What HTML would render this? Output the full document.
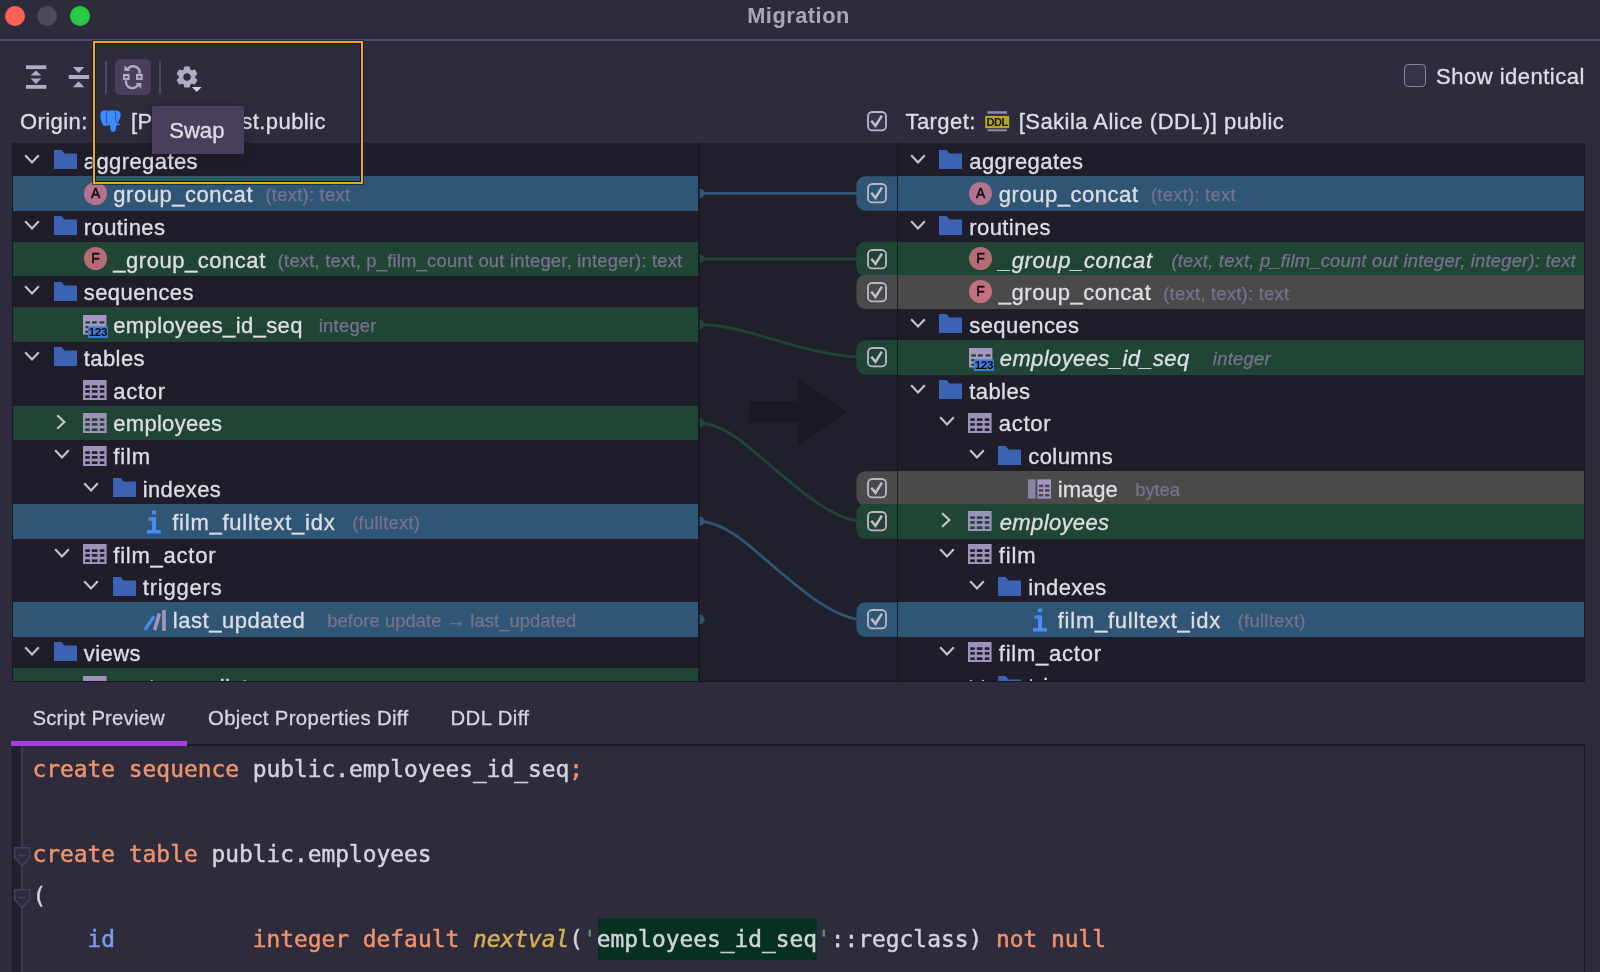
<!DOCTYPE html><html><head><meta charset="utf-8"><title>Migration</title><style>
*{box-sizing:border-box}
html,body{margin:0;padding:0}
body{width:1600px;height:972px;overflow:hidden;background:#2d2b3c;position:relative;font-family:"Liberation Sans",sans-serif;color:#dddde5}
#root{position:absolute;left:0;top:0;width:1600px;height:972px;overflow:hidden;will-change:transform}
.abs{position:absolute}
.ic{position:absolute;display:block;overflow:visible}
.panel{position:absolute;top:143px;height:538.7px;background:#1e1d29;overflow:hidden}
.row{position:absolute;left:0;width:100%;height:34.5px}
.tx{position:absolute;top:2.8px;height:32.78px;line-height:32.78px;white-space:nowrap}
.nm{font-size:22px;letter-spacing:0.42px;color:#dddde5;-webkit-text-stroke:0.35px #dddde5}
.dt{font-size:18.4px;letter-spacing:0.25px;color:#77728f;-webkit-text-stroke:0.25px #77728f;margin-left:13px;position:relative;top:-0.8px}
.it{font-style:italic}
.lbl{position:absolute;font-size:22px;letter-spacing:0.42px;white-space:nowrap;line-height:30px;color:#dddde5;-webkit-text-stroke:0.35px #dddde5}
.tab{position:absolute;top:702.6px;font-size:20.3px;letter-spacing:0.42px;line-height:30px;white-space:nowrap;color:#d6d5df;-webkit-text-stroke:0.3px #d6d5df}
.code{position:absolute;left:32.5px;font-family:"DejaVu Sans Mono","Liberation Mono",monospace;font-size:22.87px;line-height:42.5px;white-space:pre;color:#d3d4dc;-webkit-text-stroke:0.45px}
.kw{color:#f0936e}
.fn{color:#d9b14e;font-style:italic}
.id{color:#7e9df2}
.st{color:#4e9a62}
</style></head><body><div id="root">
<div class="abs" style="left:5px;top:6.3px;width:20.2px;height:20.2px;border-radius:50%;background:#fe5f57"></div>
<div class="abs" style="left:37.3px;top:6.3px;width:20.2px;height:20.2px;border-radius:50%;background:#4c4a5a"></div>
<div class="abs" style="left:70.1px;top:6.3px;width:20.2px;height:20.2px;border-radius:50%;background:#28c840"></div>
<div class="abs" style="left:0;top:0;width:1600px;height:32px;line-height:32px;text-align:center;font-weight:bold;font-size:21.8px;letter-spacing:0.5px;color:#a9a7b5;padding-right:3px">Migration</div>
<div class="abs" style="left:0;top:39px;width:1600px;height:2px;background:#4d4a66"></div>
<svg class="ic" style="left:25px;top:64px" width="23" height="26" viewBox="0 0 23 26"><rect x="0.9" y="1.3" width="20.4" height="3.8" fill="#b0acc2"/><rect x="0.9" y="21" width="20.4" height="3.8" fill="#b0acc2"/><path d="M10.9 6.5 L16.3 11.6 H5.5 Z" fill="#b0acc2"/><path d="M5.5 14.4 H16.3 L10.9 20 Z" fill="#b0acc2"/></svg>
<svg class="ic" style="left:68px;top:64px" width="23" height="26" viewBox="0 0 23 26"><path d="M4.8 2.9 H16.4 L10.6 9.1 Z" fill="#b0acc2"/><rect x="0.75" y="11" width="20.3" height="4" fill="#b0acc2"/><path d="M10.6 17.2 L16.4 23.2 H4.8 Z" fill="#b0acc2"/></svg>
<div class="abs" style="left:105px;top:60.6px;width:1.8px;height:33px;background:#4a4860"></div>
<div class="abs" style="left:159px;top:60.6px;width:1.8px;height:33px;background:#4a4860"></div>
<div class="abs" style="left:115px;top:58.8px;width:36px;height:36.2px;border-radius:5.5px;background:#493e5b"></div>
<svg class="ic" style="left:119px;top:63px" width="28" height="28" viewBox="0 0 28 28">
<path d="M20.6 10.6 A6.5 6.5 0 0 0 8.6 6.4" fill="none" stroke="#b0acc2" stroke-width="2.5"/>
<path d="M5.5 2.2 V7.9 H11.3 Z" fill="#b0acc2"/>
<path d="M7.1 17.4 A6.5 6.5 0 0 0 19.2 21.7" fill="none" stroke="#b0acc2" stroke-width="2.5"/>
<path d="M22.3 25.9 V20.1 H16.5 Z" fill="#b0acc2"/>
<rect x="4" y="10.9" width="6.6" height="6.2" fill="#b0acc2"/><rect x="6.3" y="13" width="2.1" height="2.1" fill="#493e5b"/>
<rect x="17" y="10.9" width="6.7" height="6.2" fill="#b0acc2"/><rect x="19.3" y="13" width="2.1" height="2.1" fill="#493e5b"/>
</svg>
<svg class="ic" style="left:175px;top:64.85px" width="30" height="30" viewBox="0 0 30 30"><path d="M9.18 4.73 L9.81 1.99 L14.19 1.99 L14.82 4.73 L16.89 5.92 L19.58 5.10 L21.77 8.89 L19.71 10.81 L19.71 13.19 L21.77 15.11 L19.58 18.90 L16.89 18.08 L14.82 19.27 L14.19 22.01 L9.81 22.01 L9.18 19.27 L7.11 18.08 L4.42 18.90 L2.23 15.11 L4.29 13.19 L4.29 10.81 L2.23 8.89 L4.42 5.10 L7.11 5.92 Z M16.3 12 A4.3 4.3 0 1 0 7.7 12 A4.3 4.3 0 1 0 16.3 12 Z" fill="#b0acc2" fill-rule="evenodd" stroke="#b0acc2" stroke-width="1.1" stroke-linejoin="round"/><path d="M16.85 22 H26.7 L21.8 27 Z" fill="#d5d3dd"/></svg>
<div class="abs" style="left:1403.5px;top:64.3px;width:22.6px;height:22.6px;border-radius:4px;border:1.7px solid #8c7fa8;background:#363346"></div>
<div class="lbl" style="left:1436px;top:61.6px;letter-spacing:0.5px">Show identical</div>
<div class="lbl" style="left:20px;top:107.1px">Origin:</div>
<svg class="ic" style="left:99.5px;top:110px" width="22" height="23" viewBox="0 0 22 23">
<path d="M3.6 0.6 C1.2 0.9 0.1 3.2 0.3 6 C0.5 9.4 1.6 13.4 3.4 15.4 C4.4 16.4 5.6 16 6.2 15 C6.6 15.8 7.6 16.2 8.6 15.4 C9.2 15.6 9.8 15.4 10.2 15 C10.2 16.6 10.2 18.4 10.6 19.8 C11 21.4 12.2 22.2 13.4 22 C14.8 21.8 15.8 20.6 16 18.6 L16.3 15.2 C17.6 15.4 19.2 15.2 20.4 14.2 C19.8 13.6 18.4 14 17.4 13.6 C17.3 13.4 17.4 13 17.6 12.8 C19.6 10.2 21.2 6.2 20.6 3.4 C20 0.9 17 0 14.4 0.7 C12.6 0.1 9.8 0.2 8.2 1 C6.8 0.4 5 0.4 3.6 0.6 Z" fill="#3c8bff"/>
<path d="M7 1.6 C5.8 4.6 6 9.4 6.8 13.4 M14.8 1.4 C16.4 3.4 15.8 6.4 15.6 8 C15.4 9.6 16.8 11.2 16.6 13" fill="none" stroke="#27304f" stroke-width="0.75" opacity="0.8"/>
</svg>
<div class="lbl" style="left:130.9px;top:107.1px">[P<span style="letter-spacing:-0.66px">agila] gue</span>st.public</div>
<svg class="ic" style="left:867.00px;top:111.00px" width="20" height="20.4" viewBox="0 0 20 20.4"><rect x="1" y="1" width="18" height="18.4" rx="4.2" fill="#363447" stroke="#bcb5c9" stroke-width="1.85"/><path d="M4.3 9.7 L8.5 14.9 L14.9 4.7" fill="none" stroke="#c4bed1" stroke-width="2.5" stroke-linejoin="miter"/></svg>
<div class="lbl" style="left:905.5px;top:107.1px">Target:</div>
<svg class="ic" style="left:984.5px;top:111px" width="25" height="21" viewBox="0 0 25 21">
<rect x="2.4" y="0.2" width="19.6" height="2.5" fill="#9388ad"/><rect x="2.4" y="18.3" width="19.6" height="2" fill="#9388ad"/>
<rect x="0.2" y="4.9" width="24" height="12.3" fill="#b5a81e"/>
<text x="12.2" y="15.3" text-anchor="middle" font-family="Liberation Sans, sans-serif" font-weight="bold" font-size="11.2" letter-spacing="-0.5" fill="#15131a">DDL</text></svg>
<div class="lbl" style="left:1018.7px;top:107.1px;letter-spacing:0.46px">[Sakila Alice (DDL)] public</div>
<div class="abs" style="left:698.5px;top:143px;width:199px;height:538.7px;background:#20202d;border-bottom:1.4px solid #1b1825"></div>
<div class="abs" style="left:698.6px;top:143px;width:1.2px;height:538.7px;background:#1b1825"></div>
<div class="abs" style="left:12px;top:142.6px;width:1572.5px;height:1.2px;background:#211c2a"></div>
<svg class="ic" style="left:748px;top:378px" width="100" height="68" viewBox="0 0 100 68"><path d="M0.8 23.2 H50 V0.8 L99 34 L50 67.4 V44.6 H0.8 Z" fill="#191923"/></svg>
<div class="panel" style="left:12px;width:687.4px">
<div class="row" style="top:0.45px;"><svg class="ic" style="left:11.00px;top:8.75px" width="18" height="14" viewBox="0 0 18 14"><path d="M2.2 3.2 L9 10.4 L15.8 3.2" fill="none" stroke="#c6c6cc" stroke-width="2.1" stroke-linecap="butt" stroke-linejoin="miter"/></svg><svg class="ic" style="left:41.75px;top:7.05px" width="23" height="19" viewBox="0 0 23 19"><path d="M0 0 H7.6 L10.6 3.6 H23 V19 H0 Z" fill="#3c62b4"/></svg><div class="tx" style="left:71.75px"><span class="nm">aggregates</span></div></div>
<div class="row" style="top:33.23px;background:#2f5674;"><svg class="ic" style="left:71.75px;top:5.65px" width="23" height="23" viewBox="0 0 23 23"><circle cx="11.5" cy="11.5" r="11.5" fill="#b5728f"/><text x="11.5" y="16.3" text-anchor="middle" font-family="Liberation Sans, sans-serif" font-size="13.8" fill="#100e16" stroke="#100e16" stroke-width="0.55">A</text></svg><div class="tx" style="left:101.25px"><span class="nm" style="letter-spacing:0.538px">group_concat</span><span class="dt" style="margin-left:12.46px">(text): text</span></div></div>
<div class="row" style="top:66.01px;"><svg class="ic" style="left:11.00px;top:8.75px" width="18" height="14" viewBox="0 0 18 14"><path d="M2.2 3.2 L9 10.4 L15.8 3.2" fill="none" stroke="#c6c6cc" stroke-width="2.1" stroke-linecap="butt" stroke-linejoin="miter"/></svg><svg class="ic" style="left:41.75px;top:7.05px" width="23" height="19" viewBox="0 0 23 19"><path d="M0 0 H7.6 L10.6 3.6 H23 V19 H0 Z" fill="#3c62b4"/></svg><div class="tx" style="left:71.75px"><span class="nm">routines</span></div></div>
<div class="row" style="top:98.79px;background:#204534;"><svg class="ic" style="left:71.75px;top:5.65px" width="23" height="23" viewBox="0 0 23 23"><circle cx="11.5" cy="11.5" r="11.5" fill="#b76b78"/><text x="11.5" y="16.3" text-anchor="middle" font-family="Liberation Sans, sans-serif" font-size="13.8" fill="#100e16" stroke="#100e16" stroke-width="0.55">F</text></svg><div class="tx" style="left:101.25px"><span class="nm" style="letter-spacing:0.536px">_group_concat</span><span class="dt" style="letter-spacing:0.210px;margin-left:11.96px">(text, text, p_film_count out integer, integer): text</span></div></div>
<div class="row" style="top:131.57px;"><svg class="ic" style="left:11.00px;top:8.75px" width="18" height="14" viewBox="0 0 18 14"><path d="M2.2 3.2 L9 10.4 L15.8 3.2" fill="none" stroke="#c6c6cc" stroke-width="2.1" stroke-linecap="butt" stroke-linejoin="miter"/></svg><svg class="ic" style="left:41.75px;top:7.05px" width="23" height="19" viewBox="0 0 23 19"><path d="M0 0 H7.6 L10.6 3.6 H23 V19 H0 Z" fill="#3c62b4"/></svg><div class="tx" style="left:71.75px"><span class="nm">sequences</span></div></div>
<div class="row" style="top:164.35px;background:#204534;"><svg class="ic" style="left:71.35px;top:7.45px" width="26" height="24" viewBox="0 0 26 24"><rect x="0" y="0" width="23.4" height="19.5" fill="#a697c2"/><rect x="2.3" y="6.3" width="4.7" height="2.3" fill="#204534"/><rect x="9.0" y="6.3" width="4.7" height="2.3" fill="#204534"/><rect x="16.6" y="6.3" width="4.7" height="2.3" fill="#204534"/><rect x="2.3" y="11" width="3" height="2.3" fill="#204534"/><rect x="2.3" y="15.6" width="3" height="2.3" fill="#204534"/><rect x="4.9" y="11.3" width="20" height="11.6" fill="#3f7dd8"/><text x="14.9" y="21.4" text-anchor="middle" font-family="Liberation Sans, sans-serif" font-weight="bold" font-size="11.6" fill="#0b0b12" letter-spacing="-0.4">123</text></svg><div class="tx" style="left:101.25px"><span class="nm" style="letter-spacing:0.385px">employees_id_seq</span><span class="dt" style="margin-left:15.86px">integer</span></div></div>
<div class="row" style="top:197.13px;"><svg class="ic" style="left:11.00px;top:8.75px" width="18" height="14" viewBox="0 0 18 14"><path d="M2.2 3.2 L9 10.4 L15.8 3.2" fill="none" stroke="#c6c6cc" stroke-width="2.1" stroke-linecap="butt" stroke-linejoin="miter"/></svg><svg class="ic" style="left:41.75px;top:7.05px" width="23" height="19" viewBox="0 0 23 19"><path d="M0 0 H7.6 L10.6 3.6 H23 V19 H0 Z" fill="#3c62b4"/></svg><div class="tx" style="left:71.75px"><span class="nm">tables</span></div></div>
<div class="row" style="top:229.91px;"><svg class="ic" style="left:70.95px;top:7.25px" width="23.6" height="20" viewBox="0 0 24 20" preserveAspectRatio="none"><rect width="24" height="20" fill="#9e91ba"/><rect x="2.3" y="5.3" width="4.6" height="2.6" fill="#1e1d29"/><rect x="2.3" y="10.1" width="4.6" height="2.6" fill="#1e1d29"/><rect x="2.3" y="15.4" width="4.6" height="2.6" fill="#1e1d29"/><rect x="9.0" y="5.3" width="5.7" height="2.6" fill="#1e1d29"/><rect x="9.0" y="10.1" width="5.7" height="2.6" fill="#1e1d29"/><rect x="9.0" y="15.4" width="5.7" height="2.6" fill="#1e1d29"/><rect x="17.1" y="5.3" width="4.6" height="2.6" fill="#1e1d29"/><rect x="17.1" y="10.1" width="4.6" height="2.6" fill="#1e1d29"/><rect x="17.1" y="15.4" width="4.6" height="2.6" fill="#1e1d29"/></svg><div class="tx" style="left:101.25px"><span class="nm" style="letter-spacing:0.707px">actor</span></div></div>
<div class="row" style="top:262.69px;background:#204534;"><svg class="ic" style="left:41.70px;top:7.35px" width="14" height="18" viewBox="0 0 14 18"><path d="M3.2 2.2 L10.4 9 L3.2 15.8" fill="none" stroke="#c6c6cc" stroke-width="2.1"/></svg><svg class="ic" style="left:70.95px;top:7.25px" width="23.6" height="20" viewBox="0 0 24 20" preserveAspectRatio="none"><rect width="24" height="20" fill="#9e91ba"/><rect x="2.3" y="5.3" width="4.6" height="2.6" fill="#204534"/><rect x="2.3" y="10.1" width="4.6" height="2.6" fill="#204534"/><rect x="2.3" y="15.4" width="4.6" height="2.6" fill="#204534"/><rect x="9.0" y="5.3" width="5.7" height="2.6" fill="#204534"/><rect x="9.0" y="10.1" width="5.7" height="2.6" fill="#204534"/><rect x="9.0" y="15.4" width="5.7" height="2.6" fill="#204534"/><rect x="17.1" y="5.3" width="4.6" height="2.6" fill="#204534"/><rect x="17.1" y="10.1" width="4.6" height="2.6" fill="#204534"/><rect x="17.1" y="15.4" width="4.6" height="2.6" fill="#204534"/></svg><div class="tx" style="left:101.25px"><span class="nm" style="letter-spacing:0.295px">employees</span></div></div>
<div class="row" style="top:295.47px;"><svg class="ic" style="left:40.50px;top:8.75px" width="18" height="14" viewBox="0 0 18 14"><path d="M2.2 3.2 L9 10.4 L15.8 3.2" fill="none" stroke="#c6c6cc" stroke-width="2.1" stroke-linecap="butt" stroke-linejoin="miter"/></svg><svg class="ic" style="left:70.95px;top:7.25px" width="23.6" height="20" viewBox="0 0 24 20" preserveAspectRatio="none"><rect width="24" height="20" fill="#9e91ba"/><rect x="2.3" y="5.3" width="4.6" height="2.6" fill="#1e1d29"/><rect x="2.3" y="10.1" width="4.6" height="2.6" fill="#1e1d29"/><rect x="2.3" y="15.4" width="4.6" height="2.6" fill="#1e1d29"/><rect x="9.0" y="5.3" width="5.7" height="2.6" fill="#1e1d29"/><rect x="9.0" y="10.1" width="5.7" height="2.6" fill="#1e1d29"/><rect x="9.0" y="15.4" width="5.7" height="2.6" fill="#1e1d29"/><rect x="17.1" y="5.3" width="4.6" height="2.6" fill="#1e1d29"/><rect x="17.1" y="10.1" width="4.6" height="2.6" fill="#1e1d29"/><rect x="17.1" y="15.4" width="4.6" height="2.6" fill="#1e1d29"/></svg><div class="tx" style="left:101.25px"><span class="nm" style="letter-spacing:0.844px">film</span></div></div>
<div class="row" style="top:328.25px;"><svg class="ic" style="left:70.00px;top:8.75px" width="18" height="14" viewBox="0 0 18 14"><path d="M2.2 3.2 L9 10.4 L15.8 3.2" fill="none" stroke="#c6c6cc" stroke-width="2.1" stroke-linecap="butt" stroke-linejoin="miter"/></svg><svg class="ic" style="left:100.75px;top:7.05px" width="23" height="19" viewBox="0 0 23 19"><path d="M0 0 H7.6 L10.6 3.6 H23 V19 H0 Z" fill="#3c62b4"/></svg><div class="tx" style="left:130.75px"><span class="nm" style="letter-spacing:0.359px">indexes</span></div></div>
<div class="row" style="top:361.03px;background:#2f5674;"><svg class="ic" style="left:135.05px;top:5.85px" width="15" height="24" viewBox="0 0 15 24"><rect x="4.9" y="0.6" width="4.2" height="3.8" fill="#4a8cf7"/><rect x="1.5" y="7.4" width="7.6" height="3.3" fill="#4a8cf7"/><rect x="4.9" y="7.4" width="4.2" height="14" fill="#4a8cf7"/><rect x="0" y="20.1" width="13.9" height="3.4" fill="#4a8cf7"/></svg><div class="tx" style="left:160.25px"><span class="nm" style="letter-spacing:0.757px">film_fulltext_idx</span><span class="dt" style="margin-left:16.74px">(fulltext)</span></div></div>
<div class="row" style="top:393.81px;"><svg class="ic" style="left:40.50px;top:8.75px" width="18" height="14" viewBox="0 0 18 14"><path d="M2.2 3.2 L9 10.4 L15.8 3.2" fill="none" stroke="#c6c6cc" stroke-width="2.1" stroke-linecap="butt" stroke-linejoin="miter"/></svg><svg class="ic" style="left:70.95px;top:7.25px" width="23.6" height="20" viewBox="0 0 24 20" preserveAspectRatio="none"><rect width="24" height="20" fill="#9e91ba"/><rect x="2.3" y="5.3" width="4.6" height="2.6" fill="#1e1d29"/><rect x="2.3" y="10.1" width="4.6" height="2.6" fill="#1e1d29"/><rect x="2.3" y="15.4" width="4.6" height="2.6" fill="#1e1d29"/><rect x="9.0" y="5.3" width="5.7" height="2.6" fill="#1e1d29"/><rect x="9.0" y="10.1" width="5.7" height="2.6" fill="#1e1d29"/><rect x="9.0" y="15.4" width="5.7" height="2.6" fill="#1e1d29"/><rect x="17.1" y="5.3" width="4.6" height="2.6" fill="#1e1d29"/><rect x="17.1" y="10.1" width="4.6" height="2.6" fill="#1e1d29"/><rect x="17.1" y="15.4" width="4.6" height="2.6" fill="#1e1d29"/></svg><div class="tx" style="left:101.25px"><span class="nm" style="letter-spacing:0.766px">film_actor</span></div></div>
<div class="row" style="top:426.59px;"><svg class="ic" style="left:70.00px;top:8.75px" width="18" height="14" viewBox="0 0 18 14"><path d="M2.2 3.2 L9 10.4 L15.8 3.2" fill="none" stroke="#c6c6cc" stroke-width="2.1" stroke-linecap="butt" stroke-linejoin="miter"/></svg><svg class="ic" style="left:100.75px;top:7.05px" width="23" height="19" viewBox="0 0 23 19"><path d="M0 0 H7.6 L10.6 3.6 H23 V19 H0 Z" fill="#3c62b4"/></svg><div class="tx" style="left:130.75px"><span class="nm" style="letter-spacing:0.806px">triggers</span></div></div>
<div class="row" style="top:459.37px;background:#2f5674;"><svg class="ic" style="left:131.25px;top:6.15px" width="24" height="24" viewBox="0 0 24 24"><path d="M2 20.6 L11 7.4" stroke="#4a8cf7" stroke-width="3.4" fill="none"/><path d="M11.6 21.2 L16.4 4.6" stroke="#a293bd" stroke-width="3.6" fill="none"/><rect x="19.1" y="1" width="3.8" height="21" fill="#a293bd"/></svg><div class="tx" style="left:160.75px"><span class="nm" style="letter-spacing:0.545px">last_updated</span><span class="dt" style="letter-spacing:0.057px;margin-left:21.95px">before update → last_updated</span></div></div>
<div class="row" style="top:492.15px;"><svg class="ic" style="left:11.00px;top:8.75px" width="18" height="14" viewBox="0 0 18 14"><path d="M2.2 3.2 L9 10.4 L15.8 3.2" fill="none" stroke="#c6c6cc" stroke-width="2.1" stroke-linecap="butt" stroke-linejoin="miter"/></svg><svg class="ic" style="left:41.75px;top:7.05px" width="23" height="19" viewBox="0 0 23 19"><path d="M0 0 H7.6 L10.6 3.6 H23 V19 H0 Z" fill="#3c62b4"/></svg><div class="tx" style="left:71.75px"><span class="nm">views</span></div></div>
<div class="row" style="top:524.93px;background:#204534;"><svg class="ic" style="left:70.95px;top:8.25px" width="23.6" height="20" viewBox="0 0 24 20" preserveAspectRatio="none"><rect width="24" height="20" fill="#9e91ba"/><rect x="2.3" y="5.3" width="4.6" height="2.6" fill="#204534"/><rect x="2.3" y="10.1" width="4.6" height="2.6" fill="#204534"/><rect x="2.3" y="15.4" width="4.6" height="2.6" fill="#204534"/><rect x="9.0" y="5.3" width="5.7" height="2.6" fill="#204534"/><rect x="9.0" y="10.1" width="5.7" height="2.6" fill="#204534"/><rect x="9.0" y="15.4" width="5.7" height="2.6" fill="#204534"/><rect x="17.1" y="5.3" width="4.6" height="2.6" fill="#204534"/><rect x="17.1" y="10.1" width="4.6" height="2.6" fill="#204534"/><rect x="17.1" y="15.4" width="4.6" height="2.6" fill="#204534"/></svg><div class="tx" style="left:101.25px;top:3.8px"><span class="nm">customer_list</span></div></div>
<div class="abs" style="left:0;top:0;right:0;bottom:0;border:1.1px solid #1b1825;border-top:none;border-bottom-width:1.4px"></div></div>
<div class="panel" style="left:897.5px;width:687px">
<div class="row" style="top:0.45px;"><svg class="ic" style="left:11.00px;top:8.75px" width="18" height="14" viewBox="0 0 18 14"><path d="M2.2 3.2 L9 10.4 L15.8 3.2" fill="none" stroke="#c6c6cc" stroke-width="2.1" stroke-linecap="butt" stroke-linejoin="miter"/></svg><svg class="ic" style="left:41.75px;top:7.05px" width="23" height="19" viewBox="0 0 23 19"><path d="M0 0 H7.6 L10.6 3.6 H23 V19 H0 Z" fill="#3c62b4"/></svg><div class="tx" style="left:71.75px"><span class="nm">aggregates</span></div></div>
<div class="row" style="top:33.23px;background:#2f5674;"><svg class="ic" style="left:71.75px;top:5.65px" width="23" height="23" viewBox="0 0 23 23"><circle cx="11.5" cy="11.5" r="11.5" fill="#b5728f"/><text x="11.5" y="16.3" text-anchor="middle" font-family="Liberation Sans, sans-serif" font-size="13.8" fill="#100e16" stroke="#100e16" stroke-width="0.55">A</text></svg><div class="tx" style="left:101.25px"><span class="nm" style="letter-spacing:0.538px">group_concat</span><span class="dt" style="margin-left:12.46px">(text): text</span></div></div>
<div class="row" style="top:66.01px;"><svg class="ic" style="left:11.00px;top:8.75px" width="18" height="14" viewBox="0 0 18 14"><path d="M2.2 3.2 L9 10.4 L15.8 3.2" fill="none" stroke="#c6c6cc" stroke-width="2.1" stroke-linecap="butt" stroke-linejoin="miter"/></svg><svg class="ic" style="left:41.75px;top:7.05px" width="23" height="19" viewBox="0 0 23 19"><path d="M0 0 H7.6 L10.6 3.6 H23 V19 H0 Z" fill="#3c62b4"/></svg><div class="tx" style="left:71.75px"><span class="nm">routines</span></div></div>
<div class="row" style="top:98.79px;background:#204534;"><svg class="ic" style="left:71.75px;top:5.65px" width="23" height="23" viewBox="0 0 23 23"><circle cx="11.5" cy="11.5" r="11.5" fill="#b76b78"/><text x="11.5" y="16.3" text-anchor="middle" font-family="Liberation Sans, sans-serif" font-size="13.8" fill="#100e16" stroke="#100e16" stroke-width="0.55">F</text></svg><div class="tx" style="left:101.25px"><span class="nm it" style="letter-spacing:0.641px">_group_concat</span><span class="dt it" style="letter-spacing:0.206px;margin-left:18.76px">(text, text, p_film_count out integer, integer): text</span></div></div>
<div class="row" style="top:131.57px;background:#494a4a;"><svg class="ic" style="left:71.75px;top:5.65px" width="23" height="23" viewBox="0 0 23 23"><circle cx="11.5" cy="11.5" r="11.5" fill="#c4707f"/><text x="11.5" y="16.3" text-anchor="middle" font-family="Liberation Sans, sans-serif" font-size="13.8" fill="#100e16" stroke="#100e16" stroke-width="0.55">F</text></svg><div class="tx" style="left:101.25px"><span class="nm" style="letter-spacing:0.536px">_group_concat</span><span class="dt" style="margin-left:11.96px">(text, text): text</span></div></div>
<div class="row" style="top:164.35px;"><svg class="ic" style="left:11.00px;top:8.75px" width="18" height="14" viewBox="0 0 18 14"><path d="M2.2 3.2 L9 10.4 L15.8 3.2" fill="none" stroke="#c6c6cc" stroke-width="2.1" stroke-linecap="butt" stroke-linejoin="miter"/></svg><svg class="ic" style="left:41.75px;top:7.05px" width="23" height="19" viewBox="0 0 23 19"><path d="M0 0 H7.6 L10.6 3.6 H23 V19 H0 Z" fill="#3c62b4"/></svg><div class="tx" style="left:71.75px"><span class="nm">sequences</span></div></div>
<div class="row" style="top:197.13px;background:#204534;"><svg class="ic" style="left:71.35px;top:7.45px" width="26" height="24" viewBox="0 0 26 24"><rect x="0" y="0" width="23.4" height="19.5" fill="#a697c2"/><rect x="2.3" y="6.3" width="4.7" height="2.3" fill="#204534"/><rect x="9.0" y="6.3" width="4.7" height="2.3" fill="#204534"/><rect x="16.6" y="6.3" width="4.7" height="2.3" fill="#204534"/><rect x="2.3" y="11" width="3" height="2.3" fill="#204534"/><rect x="2.3" y="15.6" width="3" height="2.3" fill="#204534"/><rect x="4.9" y="11.3" width="20" height="11.6" fill="#3f7dd8"/><text x="14.9" y="21.4" text-anchor="middle" font-family="Liberation Sans, sans-serif" font-weight="bold" font-size="11.6" fill="#0b0b12" letter-spacing="-0.4">123</text></svg><div class="tx" style="left:102.25px"><span class="nm it" style="letter-spacing:0.402px">employees_id_seq</span><span class="dt it" style="margin-left:23.20px">integer</span></div></div>
<div class="row" style="top:229.91px;"><svg class="ic" style="left:11.00px;top:8.75px" width="18" height="14" viewBox="0 0 18 14"><path d="M2.2 3.2 L9 10.4 L15.8 3.2" fill="none" stroke="#c6c6cc" stroke-width="2.1" stroke-linecap="butt" stroke-linejoin="miter"/></svg><svg class="ic" style="left:41.75px;top:7.05px" width="23" height="19" viewBox="0 0 23 19"><path d="M0 0 H7.6 L10.6 3.6 H23 V19 H0 Z" fill="#3c62b4"/></svg><div class="tx" style="left:71.75px"><span class="nm">tables</span></div></div>
<div class="row" style="top:262.69px;"><svg class="ic" style="left:40.50px;top:8.75px" width="18" height="14" viewBox="0 0 18 14"><path d="M2.2 3.2 L9 10.4 L15.8 3.2" fill="none" stroke="#c6c6cc" stroke-width="2.1" stroke-linecap="butt" stroke-linejoin="miter"/></svg><svg class="ic" style="left:70.95px;top:7.25px" width="23.6" height="20" viewBox="0 0 24 20" preserveAspectRatio="none"><rect width="24" height="20" fill="#9e91ba"/><rect x="2.3" y="5.3" width="4.6" height="2.6" fill="#1e1d29"/><rect x="2.3" y="10.1" width="4.6" height="2.6" fill="#1e1d29"/><rect x="2.3" y="15.4" width="4.6" height="2.6" fill="#1e1d29"/><rect x="9.0" y="5.3" width="5.7" height="2.6" fill="#1e1d29"/><rect x="9.0" y="10.1" width="5.7" height="2.6" fill="#1e1d29"/><rect x="9.0" y="15.4" width="5.7" height="2.6" fill="#1e1d29"/><rect x="17.1" y="5.3" width="4.6" height="2.6" fill="#1e1d29"/><rect x="17.1" y="10.1" width="4.6" height="2.6" fill="#1e1d29"/><rect x="17.1" y="15.4" width="4.6" height="2.6" fill="#1e1d29"/></svg><div class="tx" style="left:101.25px"><span class="nm" style="letter-spacing:0.707px">actor</span></div></div>
<div class="row" style="top:295.47px;"><svg class="ic" style="left:70.00px;top:8.75px" width="18" height="14" viewBox="0 0 18 14"><path d="M2.2 3.2 L9 10.4 L15.8 3.2" fill="none" stroke="#c6c6cc" stroke-width="2.1" stroke-linecap="butt" stroke-linejoin="miter"/></svg><svg class="ic" style="left:100.75px;top:7.05px" width="23" height="19" viewBox="0 0 23 19"><path d="M0 0 H7.6 L10.6 3.6 H23 V19 H0 Z" fill="#3c62b4"/></svg><div class="tx" style="left:130.75px"><span class="nm">columns</span></div></div>
<div class="row" style="top:328.25px;background:#494a4a;"><svg class="ic" style="left:130.65px;top:7.45px" width="24" height="20" viewBox="0 0 24 20"><rect x="0" y="0.4" width="7.5" height="19.2" fill="#8a83a5"/><rect x="9.4" y="0.4" width="13.6" height="19.2" fill="#a596c4"/><rect x="10.8" y="5.6" width="4.6" height="2.6" fill="#494a4a"/><rect x="10.8" y="10.2" width="4.6" height="2.6" fill="#494a4a"/><rect x="10.8" y="14.9" width="4.6" height="2.6" fill="#494a4a"/><rect x="17.0" y="5.6" width="4.6" height="2.6" fill="#494a4a"/><rect x="17.0" y="10.2" width="4.6" height="2.6" fill="#494a4a"/><rect x="17.0" y="14.9" width="4.6" height="2.6" fill="#494a4a"/></svg><div class="tx" style="left:160.25px"><span class="nm" style="letter-spacing:0.020px">image</span><span class="dt" style="letter-spacing:-0.088px;margin-left:17.48px">bytea</span></div></div>
<div class="row" style="top:361.03px;background:#204534;"><svg class="ic" style="left:41.70px;top:7.35px" width="14" height="18" viewBox="0 0 14 18"><path d="M3.2 2.2 L10.4 9 L3.2 15.8" fill="none" stroke="#c6c6cc" stroke-width="2.1"/></svg><svg class="ic" style="left:70.95px;top:7.25px" width="23.6" height="20" viewBox="0 0 24 20" preserveAspectRatio="none"><rect width="24" height="20" fill="#9e91ba"/><rect x="2.3" y="5.3" width="4.6" height="2.6" fill="#204534"/><rect x="2.3" y="10.1" width="4.6" height="2.6" fill="#204534"/><rect x="2.3" y="15.4" width="4.6" height="2.6" fill="#204534"/><rect x="9.0" y="5.3" width="5.7" height="2.6" fill="#204534"/><rect x="9.0" y="10.1" width="5.7" height="2.6" fill="#204534"/><rect x="9.0" y="15.4" width="5.7" height="2.6" fill="#204534"/><rect x="17.1" y="5.3" width="4.6" height="2.6" fill="#204534"/><rect x="17.1" y="10.1" width="4.6" height="2.6" fill="#204534"/><rect x="17.1" y="15.4" width="4.6" height="2.6" fill="#204534"/></svg><div class="tx" style="left:102.25px"><span class="nm it" style="letter-spacing:0.364px">employees</span></div></div>
<div class="row" style="top:393.81px;"><svg class="ic" style="left:40.50px;top:8.75px" width="18" height="14" viewBox="0 0 18 14"><path d="M2.2 3.2 L9 10.4 L15.8 3.2" fill="none" stroke="#c6c6cc" stroke-width="2.1" stroke-linecap="butt" stroke-linejoin="miter"/></svg><svg class="ic" style="left:70.95px;top:7.25px" width="23.6" height="20" viewBox="0 0 24 20" preserveAspectRatio="none"><rect width="24" height="20" fill="#9e91ba"/><rect x="2.3" y="5.3" width="4.6" height="2.6" fill="#1e1d29"/><rect x="2.3" y="10.1" width="4.6" height="2.6" fill="#1e1d29"/><rect x="2.3" y="15.4" width="4.6" height="2.6" fill="#1e1d29"/><rect x="9.0" y="5.3" width="5.7" height="2.6" fill="#1e1d29"/><rect x="9.0" y="10.1" width="5.7" height="2.6" fill="#1e1d29"/><rect x="9.0" y="15.4" width="5.7" height="2.6" fill="#1e1d29"/><rect x="17.1" y="5.3" width="4.6" height="2.6" fill="#1e1d29"/><rect x="17.1" y="10.1" width="4.6" height="2.6" fill="#1e1d29"/><rect x="17.1" y="15.4" width="4.6" height="2.6" fill="#1e1d29"/></svg><div class="tx" style="left:101.25px"><span class="nm" style="letter-spacing:0.844px">film</span></div></div>
<div class="row" style="top:426.59px;"><svg class="ic" style="left:70.00px;top:8.75px" width="18" height="14" viewBox="0 0 18 14"><path d="M2.2 3.2 L9 10.4 L15.8 3.2" fill="none" stroke="#c6c6cc" stroke-width="2.1" stroke-linecap="butt" stroke-linejoin="miter"/></svg><svg class="ic" style="left:100.75px;top:7.05px" width="23" height="19" viewBox="0 0 23 19"><path d="M0 0 H7.6 L10.6 3.6 H23 V19 H0 Z" fill="#3c62b4"/></svg><div class="tx" style="left:130.75px"><span class="nm" style="letter-spacing:0.359px">indexes</span></div></div>
<div class="row" style="top:459.37px;background:#2f5674;"><svg class="ic" style="left:135.05px;top:5.85px" width="15" height="24" viewBox="0 0 15 24"><rect x="4.9" y="0.6" width="4.2" height="3.8" fill="#4a8cf7"/><rect x="1.5" y="7.4" width="7.6" height="3.3" fill="#4a8cf7"/><rect x="4.9" y="7.4" width="4.2" height="14" fill="#4a8cf7"/><rect x="0" y="20.1" width="13.9" height="3.4" fill="#4a8cf7"/></svg><div class="tx" style="left:160.25px"><span class="nm" style="letter-spacing:0.757px">film_fulltext_idx</span><span class="dt" style="margin-left:16.74px">(fulltext)</span></div></div>
<div class="row" style="top:492.15px;"><svg class="ic" style="left:40.50px;top:8.75px" width="18" height="14" viewBox="0 0 18 14"><path d="M2.2 3.2 L9 10.4 L15.8 3.2" fill="none" stroke="#c6c6cc" stroke-width="2.1" stroke-linecap="butt" stroke-linejoin="miter"/></svg><svg class="ic" style="left:70.95px;top:7.25px" width="23.6" height="20" viewBox="0 0 24 20" preserveAspectRatio="none"><rect width="24" height="20" fill="#9e91ba"/><rect x="2.3" y="5.3" width="4.6" height="2.6" fill="#1e1d29"/><rect x="2.3" y="10.1" width="4.6" height="2.6" fill="#1e1d29"/><rect x="2.3" y="15.4" width="4.6" height="2.6" fill="#1e1d29"/><rect x="9.0" y="5.3" width="5.7" height="2.6" fill="#1e1d29"/><rect x="9.0" y="10.1" width="5.7" height="2.6" fill="#1e1d29"/><rect x="9.0" y="15.4" width="5.7" height="2.6" fill="#1e1d29"/><rect x="17.1" y="5.3" width="4.6" height="2.6" fill="#1e1d29"/><rect x="17.1" y="10.1" width="4.6" height="2.6" fill="#1e1d29"/><rect x="17.1" y="15.4" width="4.6" height="2.6" fill="#1e1d29"/></svg><div class="tx" style="left:101.25px"><span class="nm" style="letter-spacing:0.766px">film_actor</span></div></div>
<div class="row" style="top:524.93px;"><svg class="ic" style="left:70.00px;top:9.35px" width="18" height="14" viewBox="0 0 18 14"><path d="M2.2 3.2 L9 10.4 L15.8 3.2" fill="none" stroke="#c6c6cc" stroke-width="2.1" stroke-linecap="butt" stroke-linejoin="miter"/></svg><svg class="ic" style="left:100.75px;top:7.65px" width="23" height="19" viewBox="0 0 23 19"><path d="M0 0 H7.6 L10.6 3.6 H23 V19 H0 Z" fill="#3c62b4"/></svg><div class="tx" style="left:130.75px;top:3.4px"><span class="nm" style="letter-spacing:0.806px">triggers</span></div></div>
<div class="abs" style="left:0;top:0;right:0;bottom:0;border:1.1px solid #1b1825;border-top:none;border-left:none;border-bottom-width:1.4px"></div></div>
<div class="abs" style="left:897px;top:143px;width:1.3px;height:538.7px;background:#16141d"></div>
<svg class="ic" style="left:0;top:143px" width="1600" height="537.3" viewBox="0 143 1600 537.3">
<path d="M700 193.28 L857 193.28" stroke="#2f5674" stroke-width="2.8" fill="none"/>
<path d="M699.6 188.68 C703 188.68 704.6 191.28 704.6 193.28 C704.6 195.28 703 197.88 699.6 197.88 Z" fill="#2f5674"/>
<path d="M700 258.84 L857 258.84" stroke="#204534" stroke-width="2.8" fill="none"/>
<path d="M699.6 254.24 C703 254.24 704.6 256.84 704.6 258.84 C704.6 260.84 703 263.44 699.6 263.44 Z" fill="#204534"/>
<path d="M700 324.40 C728 325.06 752 333.58 778 340.79 C806 348.66 832 355.87 858 357.18" stroke="#204534" stroke-width="2.8" fill="none"/>
<path d="M699.6 319.80 C703 319.80 704.6 322.40 704.6 324.40 C704.6 326.40 703 329.00 699.6 329.00 Z" fill="#204534"/>
<path d="M700 422.74 C728 424.71 752 450.28 778 471.91 C806 495.51 832 517.15 858 521.08" stroke="#204534" stroke-width="2.8" fill="none"/>
<path d="M699.6 418.14 C703 418.14 704.6 420.74 704.6 422.74 C704.6 424.74 703 427.34 699.6 427.34 Z" fill="#204534"/>
<path d="M700 521.08 C728 523.05 752 548.62 778 570.25 C806 593.85 832 615.49 858 619.42" stroke="#2f5674" stroke-width="2.8" fill="none"/>
<path d="M699.6 516.48 C703 516.48 704.6 519.08 704.6 521.08 C704.6 523.08 703 525.68 699.6 525.68 Z" fill="#2f5674"/>
<path d="M699.6 614.82 C703 614.82 704.6 617.42 704.6 619.42 C704.6 621.42 703 624.02 699.6 624.02 Z" fill="#2f5674"/>
<path d="M897.2 176.23 H865.4 A9 9 0 0 0 856.4 185.23 V201.73 A9 9 0 0 0 865.4 210.73 H897.2 Z" fill="#2f5674"/>
<path d="M897.2 241.79 H865.4 A9 9 0 0 0 856.4 250.79 V267.29 A9 9 0 0 0 865.4 276.29 H897.2 Z" fill="#204534"/>
<path d="M897.2 274.57 H865.4 A9 9 0 0 0 856.4 283.57 V300.07 A9 9 0 0 0 865.4 309.07 H897.2 Z" fill="#494a4a"/>
<path d="M897.2 340.13 H865.4 A9 9 0 0 0 856.4 349.13 V365.63 A9 9 0 0 0 865.4 374.63 H897.2 Z" fill="#204534"/>
<path d="M897.2 471.25 H865.4 A9 9 0 0 0 856.4 480.25 V496.75 A9 9 0 0 0 865.4 505.75 H897.2 Z" fill="#494a4a"/>
<path d="M897.2 504.03 H865.4 A9 9 0 0 0 856.4 513.03 V529.53 A9 9 0 0 0 865.4 538.53 H897.2 Z" fill="#204534"/>
<path d="M897.2 602.37 H865.4 A9 9 0 0 0 856.4 611.37 V627.87 A9 9 0 0 0 865.4 636.87 H897.2 Z" fill="#2f5674"/>
</svg>
<svg class="ic" style="left:867.10px;top:183.33px" width="20" height="20.4" viewBox="0 0 20 20.4"><rect x="1" y="1" width="18" height="18.4" rx="4.2" fill="none" stroke="#bcb5c9" stroke-width="1.85"/><path d="M4.3 9.7 L8.5 14.9 L14.9 4.7" fill="none" stroke="#c4bed1" stroke-width="2.5" stroke-linejoin="miter"/></svg>
<svg class="ic" style="left:867.10px;top:248.89px" width="20" height="20.4" viewBox="0 0 20 20.4"><rect x="1" y="1" width="18" height="18.4" rx="4.2" fill="none" stroke="#bcb5c9" stroke-width="1.85"/><path d="M4.3 9.7 L8.5 14.9 L14.9 4.7" fill="none" stroke="#c4bed1" stroke-width="2.5" stroke-linejoin="miter"/></svg>
<svg class="ic" style="left:867.10px;top:281.67px" width="20" height="20.4" viewBox="0 0 20 20.4"><rect x="1" y="1" width="18" height="18.4" rx="4.2" fill="none" stroke="#bcb5c9" stroke-width="1.85"/><path d="M4.3 9.7 L8.5 14.9 L14.9 4.7" fill="none" stroke="#c4bed1" stroke-width="2.5" stroke-linejoin="miter"/></svg>
<svg class="ic" style="left:867.10px;top:347.23px" width="20" height="20.4" viewBox="0 0 20 20.4"><rect x="1" y="1" width="18" height="18.4" rx="4.2" fill="none" stroke="#bcb5c9" stroke-width="1.85"/><path d="M4.3 9.7 L8.5 14.9 L14.9 4.7" fill="none" stroke="#c4bed1" stroke-width="2.5" stroke-linejoin="miter"/></svg>
<svg class="ic" style="left:867.10px;top:478.35px" width="20" height="20.4" viewBox="0 0 20 20.4"><rect x="1" y="1" width="18" height="18.4" rx="4.2" fill="none" stroke="#bcb5c9" stroke-width="1.85"/><path d="M4.3 9.7 L8.5 14.9 L14.9 4.7" fill="none" stroke="#c4bed1" stroke-width="2.5" stroke-linejoin="miter"/></svg>
<svg class="ic" style="left:867.10px;top:511.13px" width="20" height="20.4" viewBox="0 0 20 20.4"><rect x="1" y="1" width="18" height="18.4" rx="4.2" fill="none" stroke="#bcb5c9" stroke-width="1.85"/><path d="M4.3 9.7 L8.5 14.9 L14.9 4.7" fill="none" stroke="#c4bed1" stroke-width="2.5" stroke-linejoin="miter"/></svg>
<svg class="ic" style="left:867.10px;top:609.47px" width="20" height="20.4" viewBox="0 0 20 20.4"><rect x="1" y="1" width="18" height="18.4" rx="4.2" fill="none" stroke="#bcb5c9" stroke-width="1.85"/><path d="M4.3 9.7 L8.5 14.9 L14.9 4.7" fill="none" stroke="#c4bed1" stroke-width="2.5" stroke-linejoin="miter"/></svg>
<div class="abs" style="left:0;top:681.7px;width:1600px;height:291px;background:#2d2b3c"></div>
<div class="tab" style="left:32.5px;letter-spacing:0.2px">Script Preview</div>
<div class="tab" style="left:208px;letter-spacing:0.37px">Object Properties Diff</div>
<div class="tab" style="left:450.5px">DDL Diff</div>
<div class="abs" style="left:11.3px;top:740.6px;width:175.7px;height:5.4px;background:#a53fd9"></div>
<div class="abs" style="left:187px;top:744.2px;width:1397.5px;height:2px;background:#1b1a24"></div>
<div class="abs" style="left:11.6px;top:746px;width:10px;height:226px;background:#22212d;border-left:1.4px solid #1b1825"></div>
<div class="abs" style="left:21.1px;top:746px;width:1.9px;height:226px;background:#3e3852"></div>
<div class="abs" style="left:1583.5px;top:746px;width:1.4px;height:226px;background:#1c1b25"></div>
<svg class="ic" style="left:13px;top:847.2px" width="19" height="21" viewBox="0 0 19 21"><path d="M1.6 0.8 H16.6 V10.5 L9.1 18.8 L1.6 10.5 Z" fill="#2d2b3c" stroke="#463e5d" stroke-width="1.5"/><path d="M5 8.5 H13" stroke="#463e5d" stroke-width="1.5"/></svg>
<svg class="ic" style="left:13px;top:889.4px" width="19" height="21" viewBox="0 0 19 21"><path d="M1.6 0.8 H16.6 V10.5 L9.1 18.8 L1.6 10.5 Z" fill="#2d2b3c" stroke="#463e5d" stroke-width="1.5"/><path d="M5 8.5 H13" stroke="#463e5d" stroke-width="1.5"/></svg>
<div class="abs" style="left:597.5px;top:918px;width:219.5px;height:42px;background:#06301f"></div>
<div class="code" style="top:748px"><span class="kw">create sequence</span> public.employees_id_seq<span class="kw">;</span></div>
<div class="code" style="top:833px"><span class="kw">create table</span> public.employees</div>
<div class="code" style="top:875.4px">(</div>
<div class="code" style="top:918px">    <span class="id">id</span>          <span class="kw">integer default</span> <span class="fn">nextval</span>(<span class="st">&#39;</span>employees_id_seq<span class="st">&#39;</span>::regclass) <span class="kw">not null</span></div>
<div class="abs" style="left:152px;top:106.3px;width:92.3px;height:47.5px;background:#493e5b;box-shadow:0 2px 10px rgba(0,0,0,0.25)"></div>
<div class="lbl" style="left:169.2px;top:115.9px;letter-spacing:0.05px">Swap</div>
<div class="abs" style="left:92.4px;top:40.1px;width:271.4px;height:144.6px;border:0.8px solid rgba(6,24,63,0.6)"></div>
<div class="abs" style="left:93.2px;top:40.9px;width:269.8px;height:143px;border:2.1px solid #f8a40b"></div>
<div class="abs" style="left:95.3px;top:43px;width:265.6px;height:138.8px;border:1.1px solid #06183f"></div>
</div></body></html>
